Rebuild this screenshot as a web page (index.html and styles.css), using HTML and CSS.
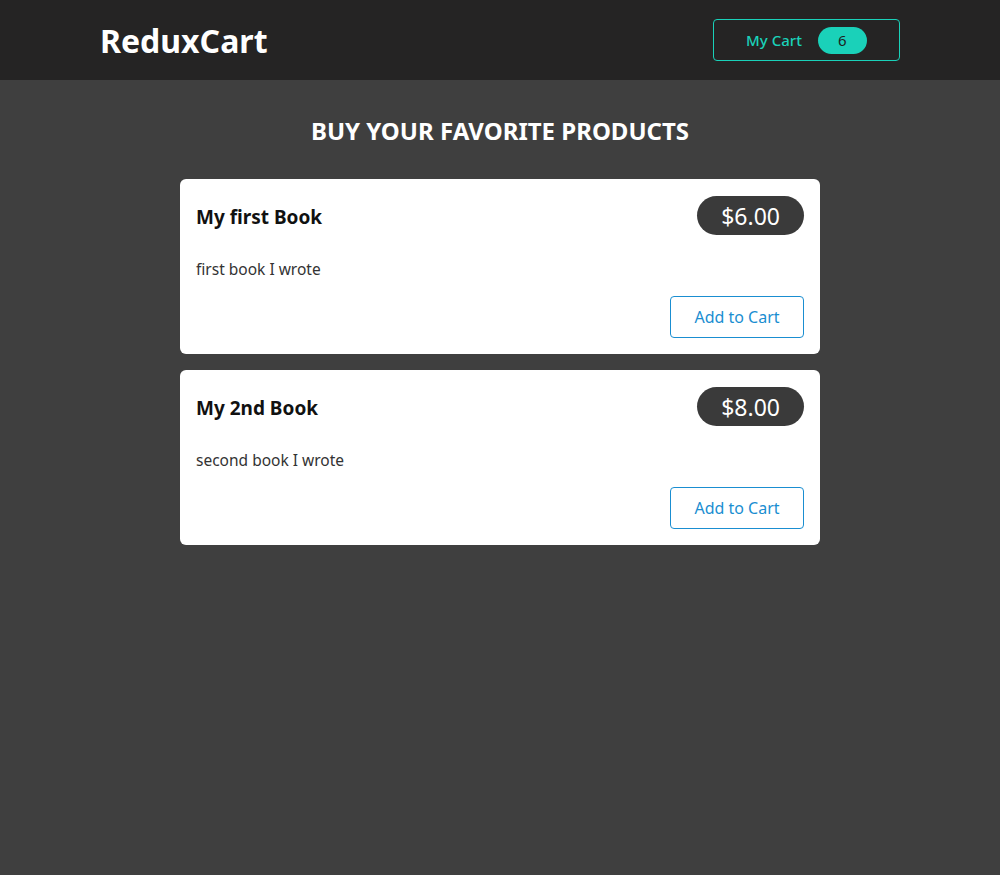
FILE: index.html
```html
<!DOCTYPE html>
<html lang="en">
<head>
<meta charset="utf-8">
<title>ReduxCart</title>
<link rel="stylesheet" href="styles.css">
</head>
<body>
<header class="header">
  <div class="header-inner">
    <h1 class="logo">ReduxCart</h1>
    <button class="cart-button">
      <span>My Cart</span>
      <span class="badge">6</span>
    </button>
  </div>
</header>
<main class="main">
  <h2 class="heading">BUY YOUR FAVORITE PRODUCTS</h2>
  <ul class="products">
    <li class="card">
      <header class="card-head">
        <h3 class="card-title">My first Book</h3>
        <div class="price">$6.00</div>
      </header>
      <p class="desc">first book I wrote</p>
      <div class="actions"><button class="add">Add to Cart</button></div>
    </li>
    <li class="card">
      <header class="card-head">
        <h3 class="card-title">My 2nd Book</h3>
        <div class="price">$8.00</div>
      </header>
      <p class="desc">second book I wrote</p>
      <div class="actions"><button class="add">Add to Cart</button></div>
    </li>
  </ul>
</main>
</body>
</html>
```
FILE: styles.css
```css
* { box-sizing: border-box; }
html, body {
  margin: 0;
  padding: 0;
}
body {
  background: #3f3f3f;
  font-family: "Noto Sans", "Open Sans", sans-serif;
  min-height: 875px;
}
.header {
  background: #252424;
  height: 80px;
}
.header-inner {
  width: 800px;
  margin: 0 auto;
  height: 80px;
  display: flex;
  align-items: center;
  justify-content: space-between;
}
.logo {
  margin: 0;
  color: #fff;
  font-size: 32px;
  font-weight: 700;
}
.cart-button {
  width: 187px;
  height: 42px;
  border: 1px solid #1ad1b9;
  border-radius: 4px;
  background: transparent;
  color: #1ad1b9;
  font-family: inherit;
  font-size: 15px;
  font-weight: 500;
  display: flex;
  align-items: center;
  justify-content: center;
  gap: 16px;
  padding: 0;
}
.badge {
  background: #1ad1b9;
  color: #1e1e1e;
  width: 49px;
  height: 27px;
  border-radius: 14px;
  display: flex;
  align-items: center;
  justify-content: center;
  font-size: 15px;
  font-weight: 400;
}
.main {
  width: 640px;
  margin: 0 auto;
  padding-top: 37px;
}
.heading {
  margin: 0 0 34px;
  color: #fff;
  text-align: center;
  font-size: 24px;
  font-weight: 700;
  line-height: 28px;
}
.products {
  list-style: none;
  margin: 0;
  padding: 0;
  display: flex;
  flex-direction: column;
  gap: 16px;
}
.card {
  background: #fff;
  border-radius: 6px;
  padding: 17px 16px 16px;
  height: 175px;
}
.card-head {
  display: flex;
  justify-content: space-between;
  align-items: center;
}
.card-title {
  margin: 3px 0 0;
  font-size: 19px;
  font-weight: 700;
  color: #111;
}
.price {
  background: #3a3a3a;
  color: #fff;
  border-radius: 20px;
  height: 39px;
  padding: 0 24px;
  display: flex;
  align-items: center;
  font-size: 23px;
}
.desc {
  margin: 24px 0 0;
  color: #333;
  font-size: 15.5px;
  line-height: 20px;
}
.actions {
  display: flex;
  justify-content: flex-end;
  margin-top: 17px;
}
.add {
  width: 134px;
  height: 42px;
  border: 1px solid #1a8ed1;
  border-radius: 4px;
  background: #fff;
  color: #1a8ed1;
  font-family: inherit;
  font-size: 16px;
}
```
